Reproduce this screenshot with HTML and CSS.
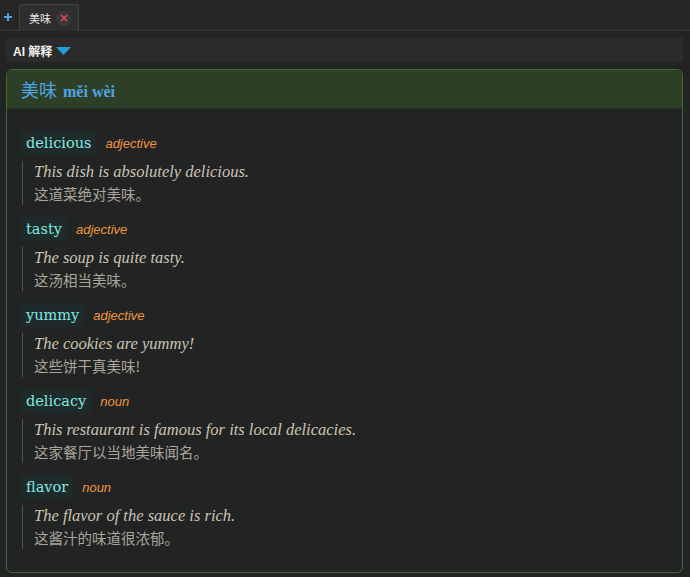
FILE: index.html
```html
<!DOCTYPE html>
<html lang="zh">
<head>
<meta charset="utf-8">
<title>美味</title>
<link rel="stylesheet" href="styles.css">
</head>
<body>
<div class="tabbar">
  <span class="add">
    <svg width="10" height="10" viewBox="0 0 10 10"><path d="M5 1v8M1 5h8" stroke="#4fa6de" stroke-width="2"/></svg>
  </span>
  <div class="tab">
    <span class="tab-title">美味</span>
    <span class="tab-close">
      <svg width="8" height="8" viewBox="0 0 8 8"><path d="M1 1l6 6M7 1L1 7" stroke="#e5484d" stroke-width="1.5"/></svg>
    </span>
  </div>
</div>

<main class="content">
  <div class="section-bar">
    <span class="section-title">AI 解释</span>
    <svg class="caret" width="15" height="8" viewBox="0 0 15 8"><path d="M0 0h15L7.5 8z" fill="#1ea0dc"/></svg>
  </div>

  <section class="card">
    <header class="card-head">
      <span class="hanzi">美味</span>
      <span class="pinyin">měi wèi</span>
    </header>
    <div class="card-body">
      <div class="entry">
        <div class="entry-head"><span class="word">delicious</span><span class="pos">adjective</span></div>
        <div class="example"><p class="en">This dish is absolutely delicious.</p><p class="zh">这道菜绝对美味。</p></div>
      </div>
      <div class="entry">
        <div class="entry-head"><span class="word">tasty</span><span class="pos">adjective</span></div>
        <div class="example"><p class="en">The soup is quite tasty.</p><p class="zh">这汤相当美味。</p></div>
      </div>
      <div class="entry">
        <div class="entry-head"><span class="word">yummy</span><span class="pos">adjective</span></div>
        <div class="example"><p class="en">The cookies are yummy!</p><p class="zh">这些饼干真美味!</p></div>
      </div>
      <div class="entry">
        <div class="entry-head"><span class="word">delicacy</span><span class="pos">noun</span></div>
        <div class="example"><p class="en">This restaurant is famous for its local delicacies.</p><p class="zh">这家餐厅以当地美味闻名。</p></div>
      </div>
      <div class="entry">
        <div class="entry-head"><span class="word">flavor</span><span class="pos">noun</span></div>
        <div class="example"><p class="en">The flavor of the sauce is rich.</p><p class="zh">这酱汁的味道很浓郁。</p></div>
      </div>
    </div>
  </section>
</main>
</body>
</html>
```

FILE: styles.css
```css
html, body {
  margin: 0;
  padding: 0;
  background: #222323;
  font-family: "Liberation Sans", "Noto Sans CJK SC", sans-serif;
  overflow: hidden;
}

.tabbar {
  display: flex;
  align-items: flex-end;
  height: 30px;
  background: #262626;
  border-bottom: 1px solid #3a3a3a;
}

.add {
  display: flex;
  width: 10px;
  height: 10px;
  margin: 0 6px 8px 3px;
}

.tab {
  display: flex;
  align-items: center;
  gap: 5px;
  height: 27px;
  box-sizing: border-box;
  padding: 0 7px 0 9px;
  background: #2e2e2e;
  border: 1px solid #424242;
  border-bottom: none;
  border-radius: 3px 3px 0 0;
  margin-bottom: -1px;
}

.tab-title {
  color: #e6e6e6;
  font-size: 11px;
  font-family: "Noto Sans CJK SC", sans-serif;
}

.tab-close {
  display: flex;
  align-items: center;
  justify-content: center;
  width: 15px;
  height: 15px;
  border-radius: 50%;
  background: #393939;
}

.content {
  padding: 7px 6px 0 6px;
  width: 677px;
}

.section-bar {
  display: flex;
  align-items: center;
  height: 24px;
  padding-left: 7px;
  background: #2b2b2b;
  gap: 4px;
}

.section-title {
  color: #f2f2f2;
  font-weight: bold;
  font-size: 12px;
  font-family: "Liberation Sans", "Noto Sans CJK SC", sans-serif;
}

.caret {
  margin-top: 1px;
}

.card {
  margin-top: 7px;
  border: 1px solid #3e6a35;
  border-radius: 6px;
  overflow: hidden;
  height: 504px;
  box-sizing: border-box;
}

.card-head {
  display: flex;
  align-items: baseline;
  gap: 6px;
  height: 39px;
  box-sizing: border-box;
  padding: 6px 14px 0;
  background: #2d3f26;
  border-bottom: 1px solid #263022;
}

.hanzi {
  color: #4ea4e2;
  font-size: 18px;
  font-family: "Noto Sans CJK SC", sans-serif;
}

.pinyin {
  color: #4ea4e2;
  font-size: 16px;
  font-weight: bold;
  font-family: "Liberation Serif", serif;
}

.card-body {
  padding: 22px 14px 0;
  display: flex;
  flex-direction: column;
  gap: 12px;
}

.entry-head {
  display: flex;
  align-items: center;
  gap: 9px;
}

.word {
  background: #1f2a2a;
  color: #7fe9e2;
  font-family: "DejaVu Serif", serif;
  font-size: 14.5px;
  padding: 0 5px;
  height: 24px;
  line-height: 24px;
  border-radius: 3px;
}

.pos {
  color: #ee9640;
  font-style: italic;
  font-size: 13px;
  font-family: "Liberation Sans", sans-serif;
}

.example {
  margin-top: 6px;
  margin-left: 1px;
  border-left: 1px solid #4a5c42;
  padding-left: 11px;
}

.example p {
  margin: 0;
}

.en {
  color: #cbc3b3;
  font-family: "Liberation Serif", serif;
  font-style: italic;
  font-size: 16.5px;
  line-height: 22px;
}

.zh {
  color: #aaa59b;
  font-family: "Noto Sans CJK SC", sans-serif;
  font-size: 14.5px;
  line-height: 22px;
}
```
